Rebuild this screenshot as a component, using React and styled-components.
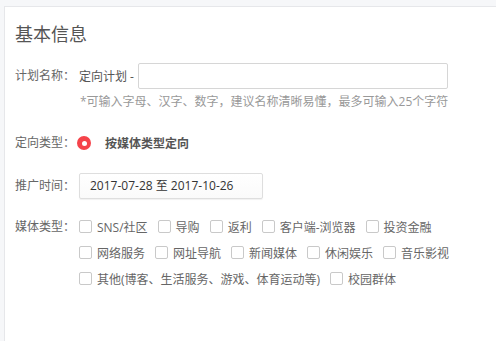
import React from "react";
import styled, { createGlobalStyle } from "styled-components";

const Global = createGlobalStyle`
  html, body { margin: 0; padding: 0; overflow: hidden; }
  body {
    background: #f6f7f9;
    font-family: "Open Sans", "Noto Sans CJK SC", sans-serif;
    font-size: 12px;
    color: #666;
  }
`;

const Card = styled.div`
  margin: 6px 0 0 4px;
  height: calc(100vh - 6px);
  background: #fff;
  border: 1px solid #e6e7ea;
  border-right: none;
  border-bottom: none;
  padding: 15px 0 0 10px;
  box-sizing: border-box;
  overflow: hidden;
`;

const Title = styled.h2`
  margin: 0;
  font-size: 18px;
  line-height: 24px;
  font-weight: normal;
  color: #555;
`;

const Row = styled.div`
  display: flex;
  align-items: ${(p) => (p.$top ? "flex-start" : "center")};
  margin-top: ${(p) => p.$mt}px;
  min-height: 26px;
`;

const Label = styled.span`
  flex: 0 0 64px;
  line-height: 26px;
  color: #666;
  white-space: nowrap;
`;

const Prefix = styled.span`
  color: #555;
  margin-right: 4px;
  white-space: nowrap;
`;

const TextInput = styled.input`
  width: 310px;
  height: 26px;
  box-sizing: border-box;
  border: 1px solid #d6d6d6;
  border-radius: 2px;
  outline: none;
  padding: 0 8px;
  font: inherit;
`;

const Hint = styled.div`
  margin: 4px 0 0 65px;
  line-height: 18px;
  color: #999;
  white-space: nowrap;
`;

const Radio = styled.span`
  width: 14px;
  height: 14px;
  border-radius: 50%;
  background: #f5434a;
  display: inline-flex;
  align-items: center;
  justify-content: center;
  margin-left: -2px;
  &::after {
    content: "";
    width: 5px;
    height: 5px;
    border-radius: 50%;
    background: #fff;
  }
`;

const RadioText = styled.span`
  margin-left: 14px;
  font-weight: bold;
  color: #555;
`;

const DateBox = styled.div`
  width: 184px;
  height: 26px;
  box-sizing: border-box;
  border: 1px solid #dedede;
  border-radius: 2px;
  box-shadow: 0 1px 1px rgba(0, 0, 0, 0.06);
  background: linear-gradient(#fff, #fafafa);
  padding-left: 10px;
  line-height: 24px;
  color: #333;
  white-space: nowrap;
`;

const Checks = styled.div`
  flex: 0 0 412px;
  display: flex;
  flex-wrap: wrap;
`;

const CheckItem = styled.label`
  display: inline-flex;
  align-items: center;
  height: 26px;
  margin-right: 10px;
  color: #666;
  white-space: nowrap;
`;

const Box = styled.span`
  width: 13px;
  height: 13px;
  box-sizing: border-box;
  border: 1px solid #c9c9c9;
  border-radius: 2px;
  background: #fff;
  margin-right: 5px;
  margin-top: -1px;
`;

const media = [
  "SNS/社区",
  "导购",
  "返利",
  "客户端-浏览器",
  "投资金融",
  "网络服务",
  "网址导航",
  "新闻媒体",
  "休闲娱乐",
  "音乐影视",
  "其他(博客、生活服务、游戏、体育运动等)",
  "校园群体",
];

export default function App() {
  return (
    <>
      <Global />
      <Card>
        <Title>基本信息</Title>
        <Row $mt={17}>
          <Label>计划名称：</Label>
          <Prefix>定向计划 -</Prefix>
          <TextInput />
        </Row>
        <Hint>*可输入字母、汉字、数字，建议名称清晰易懂，最多可输入25个字符</Hint>
        <Row $mt={19}>
          <Label>定向类型：</Label>
          <Radio />
          <RadioText>按媒体类型定向</RadioText>
        </Row>
        <Row $mt={17}>
          <Label>推广时间：</Label>
          <DateBox>2017-07-28 至 2017-10-26</DateBox>
        </Row>
        <Row $mt={15} $top>
          <Label>媒体类型：</Label>
          <Checks>
            {media.map((m) => (
              <CheckItem key={m}>
                <Box />
                {m}
              </CheckItem>
            ))}
          </Checks>
        </Row>
      </Card>
    </>
  );
}
